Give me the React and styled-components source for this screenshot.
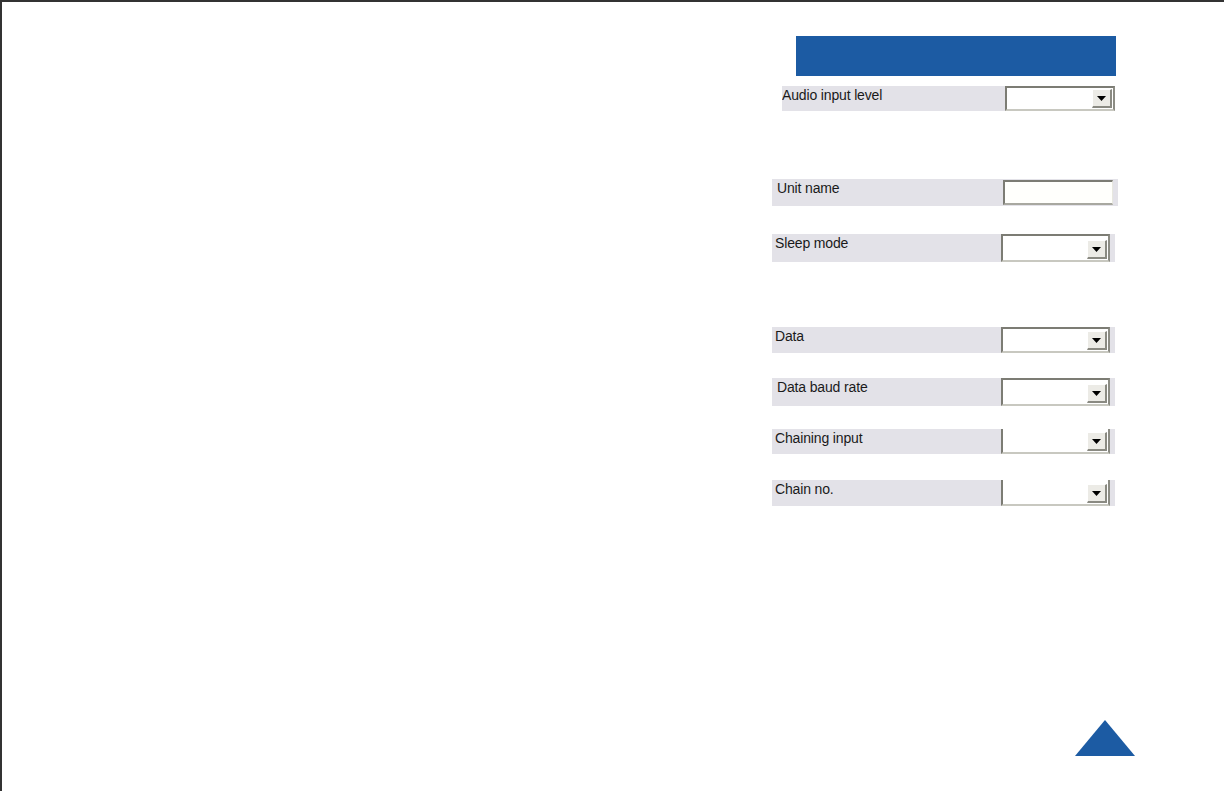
import React from 'react';
import styled, { createGlobalStyle } from 'styled-components';

const GlobalStyle = createGlobalStyle`
	html, body {
		margin: 0;
		padding: 0;
		background: #ffffff;
	}
	body {
		font-family: "Liberation Sans", Arial, sans-serif;
	}
`;

const rows = [
	{ label: 'Audio input level', kind: 'select', top: 10, left: 10, pad: 0, width: 333, tail: 0, height: 25, boxWidth: 110 },
	{ label: 'Unit name', kind: 'input', top: 68, left: 0, pad: 5, width: 346, tail: 5, height: 27, boxWidth: 110 },
	{ label: 'Sleep mode', kind: 'select', top: 28, left: 0, pad: 3, width: 343, tail: 5, height: 28, boxWidth: 109 },
	{ label: 'Data', kind: 'select', top: 65, left: 0, pad: 3, width: 343, tail: 5, height: 26, boxWidth: 109 },
	{ label: 'Data baud rate', kind: 'select', top: 25, left: 0, pad: 5, width: 343, tail: 5, height: 28, boxWidth: 109 },
	{ label: 'Chaining input', kind: 'select', top: 23, left: 0, pad: 3, width: 343, tail: 5, height: 25, boxWidth: 109, open: true },
	{ label: 'Chain no.', kind: 'select', top: 26, left: 0, pad: 3, width: 343, tail: 5, height: 26, boxWidth: 109, open: true },
];

const ArrowIcon = () => (
	<svg width="9" height="5" viewBox="0 0 9 5">
		<path d="M0 0 H9 L4.5 5 Z" fill="#000" />
	</svg>
);

const Field = ({ row }) => (
	<Row $top={row.top} $left={row.left} $width={row.width} $height={row.height} $tail={row.tail}>
		<Label $pad={row.pad}>{row.label}</Label>
		{row.kind === 'input' ? (
			<TextBox $width={row.boxWidth} />
		) : (
			<SelectBox $width={row.boxWidth} $open={row.open}>
				<DropButton>
					<ArrowIcon />
				</DropButton>
			</SelectBox>
		)}
	</Row>
);

const App = () => {
	return (
		<>
			<GlobalStyle />
			<Page>
				<Panel>
					<Header />
					{rows.map((row) => (
						<Field key={row.label} row={row} />
					))}
				</Panel>
				<Footer>
					<svg width="60" height="36" viewBox="0 0 60 36">
						<polygon points="30,0 60,36 0,36" fill="#1c5ba3" />
					</svg>
				</Footer>
			</Page>
		</>
	);
};

export default App;

const Page = styled.div`
	box-sizing: border-box;
	width: 1224px;
	height: 791px;
	border-top: 2px solid #333333;
	border-left: 2px solid #333333;
	display: flex;
	flex-direction: column;
	overflow: hidden;
`;

const Panel = styled.div`
	display: flex;
	flex-direction: column;
	width: 346px;
	margin-left: 770px;
	padding-top: 34px;
`;

const Header = styled.div`
	margin-left: 24px;
	width: 320px;
	height: 40px;
	background: #1c5ba3;
`;

const Row = styled.div`
	box-sizing: border-box;
	display: flex;
	align-items: flex-start;
	margin-top: ${(p) => p.$top}px;
	margin-left: ${(p) => p.$left}px;
	width: ${(p) => p.$width}px;
	height: ${(p) => p.$height}px;
	padding-right: ${(p) => p.$tail}px;
	background: #e3e2e8;
	overflow: hidden;
`;

const Label = styled.div`
	flex: 1;
	padding: 1px 0 0 ${(p) => p.$pad}px;
	font-size: 14px;
	letter-spacing: -0.15px;
	line-height: 17px;
	color: #1a1a1a;
	white-space: nowrap;
`;

const TextBox = styled.div`
	box-sizing: border-box;
	width: ${(p) => p.$width}px;
	height: 25px;
	margin-top: 1px;
	background: #fffffc;
	border-top: 2px solid #7c7c74;
	border-left: 2px solid #7c7c74;
	border-bottom: 2px solid #a8a8a0;
	border-right: 1px solid #e8e8e0;
`;

const SelectBox = styled.div`
	box-sizing: border-box;
	display: flex;
	justify-content: flex-end;
	align-items: flex-end;
	width: ${(p) => p.$width}px;
	height: 100%;
	padding: 0 1px 1px 0;
	background: #ffffff;
	border-top: ${(p) => (p.$open ? '0' : '2px solid #7c7c74')};
	border-left: 2px solid #7c7c74;
	border-right: 2px solid #8c8c84;
	border-bottom: 2px solid #c8c8c0;
`;

const DropButton = styled.div`
	box-sizing: border-box;
	display: flex;
	align-items: center;
	justify-content: center;
	width: 20px;
	height: 19px;
	background: #ecebe6;
	border-top: 1px solid #ffffff;
	border-left: 1px solid #ffffff;
	border-right: 2px solid #8a8a82;
	border-bottom: 2px solid #8a8a82;
`;

const Footer = styled.div`
	display: flex;
	justify-content: flex-end;
	margin-top: auto;
	padding: 0 89px 35px 0;
`;
